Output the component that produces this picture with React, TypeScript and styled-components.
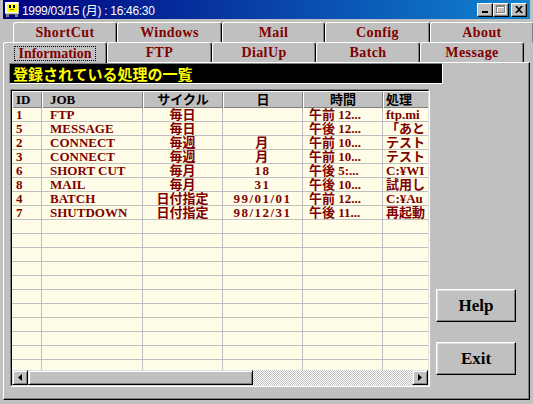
import styled, { createGlobalStyle } from "styled-components";

const GlobalStyle = createGlobalStyle`
  html, body { margin: 0; padding: 0; background: #c0c0c0; }
  body { font-family: "Liberation Serif", "Noto Sans CJK JP", serif; }
  * { box-sizing: border-box; }
`;

type Column = {
  label: string;
  width: number;
  head: "left" | "center";
  body: "left" | "center";
  pad: number;
  wide?: boolean;
};

const columns: Column[] = [
  { label: "ID", width: 30, head: "left", body: "left", pad: 4 },
  { label: "JOB", width: 101, head: "left", body: "left", pad: 8 },
  { label: "サイクル", width: 80, head: "center", body: "center", pad: 2 },
  { label: "日", width: 80, head: "center", body: "center", pad: 2, wide: true },
  { label: "時間", width: 80, head: "center", body: "left", pad: 6 },
  { label: "処理", width: 80, head: "left", body: "left", pad: 3 },
];

// the last column is cut by the list edge, so only its visible start is kept
const jobs = [
  ["1", "FTP", "毎日", "", "午前 12...", "ftp.mi"],
  ["5", "MESSAGE", "毎日", "", "午後 12...", "「あと"],
  ["2", "CONNECT", "毎週", "月", "午前 10...", "テスト"],
  ["3", "CONNECT", "毎週", "月", "午前 10...", "テスト"],
  ["6", "SHORT CUT", "毎月", "18", "午後 5:...", "C:¥WI"],
  ["8", "MAIL", "毎月", "31", "午後 10...", "試用し"],
  ["4", "BATCH", "日付指定", "99/01/01", "午前 12...", "C:¥Au"],
  ["7", "SHUTDOWN", "日付指定", "98/12/31", "午後 11...", "再起動"],
];

const backTabs = [
  { label: "ShortCut", width: 104 },
  { label: "Windows", width: 105 },
  { label: "Mail", width: 103 },
  { label: "Config", width: 105 },
  { label: "About", width: 104 },
];

const frontTabs = [
  { label: "Information", width: 104 },
  { label: "FTP", width: 105 },
  { label: "DialUp", width: 104 },
  { label: "Batch", width: 104 },
  { label: "Message", width: 104 },
];

const Window = styled.div`
  width: 533px;
  height: 404px;
  padding: 0 3px 4px 3px;
  background: #c0c0c0;
  display: flex;
  flex-direction: column;
  overflow: hidden;
`;

const TitleBar = styled.div`
  height: 19px;
  flex: none;
  display: flex;
  align-items: center;
  padding: 0 3px 0 1px;
  background: linear-gradient(90deg, #000080, #1084d0);
  color: #fff;
  font: 12px "Liberation Sans", "Noto Sans CJK JP", sans-serif;
  letter-spacing: -0.3px;
`;

const Caption = styled.span`
  margin-left: 2px;
  white-space: pre;
`;

const Controls = styled.div`
  margin-left: auto;
  display: flex;
`;

const CtrlButton = styled.div<{ $gap?: boolean }>`
  width: 16px;
  height: 14px;
  margin-left: ${(p) => (p.$gap ? 2 : 0)}px;
  background: #c0c0c0;
  border-top: 1px solid #fff;
  border-left: 1px solid #fff;
  border-right: 1px solid #000;
  border-bottom: 1px solid #000;
  box-shadow: inset -1px -1px #808080;
  display: flex;
  align-items: center;
  justify-content: center;
`;

const TabStrip = styled.div`
  margin-top: 3px;
  flex: none;
`;

const TabRow = styled.div<{ $indent: number }>`
  height: 20px;
  display: flex;
  align-items: flex-start;
  padding-left: ${(p) => p.$indent}px;
`;

const Tab = styled.div<{ $w: number; $selected?: boolean }>`
  width: ${(p) => p.$w}px;
  height: ${(p) => (p.$selected ? 21 : 20)}px;
  flex: none;
  display: flex;
  align-items: center;
  justify-content: center;
  background: #c0c0c0;
  border-top: 1px solid #fff;
  border-left: 1px solid #fff;
  border-right: 1px solid #000;
  border-radius: 3px 3px 0 0;
  box-shadow: inset -1px 0 #808080;
  color: #800000;
  font: bold 14px "Liberation Serif", serif;
  letter-spacing: 0.4px;
  position: ${(p) => (p.$selected ? "relative" : "static")};
  z-index: ${(p) => (p.$selected ? 1 : "auto")};
`;

const FocusLabel = styled.span`
  border: 1px dotted #000;
  padding: 0 3px;
  line-height: 13px;
  letter-spacing: 0;
`;

const Panel = styled.div`
  flex: 1;
  display: flex;
  flex-direction: column;
  border-top: 1px solid #fff;
  border-left: 1px solid #fff;
  border-right: 1px solid #000;
  border-bottom: 1px solid #000;
  box-shadow: inset -1px -1px #808080;
  padding-left: 5px;
`;

const Banner = styled.div`
  width: 434px;
  height: 21px;
  padding-left: 3px;
  background: #000;
  color: #ffff00;
  border-top: 1px solid #808080;
  border-left: 1px solid #808080;
  border-right: 1px solid #fff;
  border-bottom: 1px solid #fff;
  font: bold 15px "Noto Sans CJK JP", sans-serif;
  line-height: 19px;
`;

const Body = styled.div`
  display: flex;
  gap: 6px;
  margin-top: 5px;
  margin-left: 1px;
`;

const ListFrame = styled.div`
  width: 420px;
  height: 298px;
  border-top: 1px solid #808080;
  border-left: 1px solid #808080;
  border-right: 1px solid #fff;
  border-bottom: 1px solid #fff;
`;

const ListInner = styled.div`
  height: 100%;
  display: flex;
  flex-direction: column;
  overflow: hidden;
  background: #fffde8;
  border-top: 1px solid #000;
  border-left: 1px solid #000;
  border-right: 1px solid #dfdfdf;
  border-bottom: 1px solid #dfdfdf;
`;

const GridRow = styled.div<{ $head?: boolean }>`
  display: grid;
  grid-template-columns: ${columns.map((c) => `${c.width}px`).join(" ")};
  height: ${(p) => (p.$head ? 17 : 14)}px;
  flex: none;
`;

const HeadCell = styled.div<{ $align: string; $pad: number }>`
  background: #c0c0c0;
  box-shadow: inset 1px 1px #fff, inset -1px -1px #808080;
  color: #000;
  font: bold 13px "Liberation Serif", "Noto Sans CJK JP", serif;
  line-height: 17px;
  text-align: ${(p) => p.$align};
  padding: 0 ${(p) => p.$pad}px;
  white-space: nowrap;
  overflow: hidden;
`;

const Cell = styled.div<{ $align: string; $pad: number; $wide?: boolean }>`
  border-right: 1px solid #c0c0c0;
  border-bottom: 1px solid #c0c0c0;
  color: #800000;
  font: bold 13px "Liberation Serif", "Noto Sans CJK JP", serif;
  line-height: 13px;
  letter-spacing: ${(p) => (p.$wide ? 1.5 : 0)}px;
  text-align: ${(p) => p.$align};
  padding: 0 ${(p) => p.$pad}px;
  white-space: nowrap;
  overflow: hidden;
`;

const Rows = styled.div`
  flex: 1;
  overflow: hidden;
`;

const HScroll = styled.div`
  height: 15px;
  flex: none;
  display: flex;
`;

const ScrollButton = styled.div<{ $w: number }>`
  width: ${(p) => p.$w}px;
  height: 15px;
  flex: none;
  background: #c0c0c0;
  border-top: 1px solid #dfdfdf;
  border-left: 1px solid #dfdfdf;
  border-right: 1px solid #000;
  border-bottom: 1px solid #000;
  box-shadow: inset 1px 1px #fff, inset -1px -1px #808080;
  display: flex;
  align-items: center;
  justify-content: center;
`;

const Track = styled.div`
  flex: 1;
  background: repeating-conic-gradient(#c0c0c0 0% 25%, #fff 0% 50%) 0 0 / 2px 2px;
`;

const ButtonColumn = styled.div`
  width: 80px;
  display: flex;
  flex-direction: column;
  justify-content: flex-end;
  gap: 20px;
  padding-bottom: 12px;
`;

const PushButton = styled.button`
  width: 80px;
  height: 33px;
  padding: 0;
  background: #c0c0c0;
  border-top: 1px solid #fff;
  border-left: 1px solid #fff;
  border-right: 1px solid #000;
  border-bottom: 1px solid #000;
  box-shadow: inset -1px -1px #808080, inset 1px 1px #dfdfdf;
  color: #000;
  font: bold 17px "Liberation Serif", serif;
`;

const AppIcon = () => (
  <svg width="16" height="16" viewBox="0 0 16 16">
    <rect x="1" y="0" width="14" height="12" fill="#c0c0c0" />
    <rect x="1" y="0" width="13" height="11" fill="#fff" />
    <rect x="3" y="2" width="10" height="8" fill="#ffff00" />
    <rect x="5" y="3" width="2" height="3" fill="#000" />
    <rect x="9" y="3" width="2" height="3" fill="#000" />
    <rect x="6" y="7" width="4" height="1" fill="#808000" />
    <rect x="2" y="12" width="3" height="3" fill="#808080" />
    <rect x="11" y="12" width="3" height="3" fill="#808080" />
    <rect x="5" y="12" width="6" height="1" fill="#404040" />
  </svg>
);

const MinGlyph = () => (
  <svg width="8" height="7" viewBox="0 0 8 7">
    <rect x="1" y="5" width="6" height="2" fill="#000" />
  </svg>
);

const MaxGlyph = () => (
  <svg width="10" height="9" viewBox="0 0 10 9">
    <rect x="1.5" y="1.5" width="8" height="7" fill="none" stroke="#fff" />
    <rect x="1" y="1" width="8" height="2" fill="#fff" />
    <rect x="0.5" y="0.5" width="8" height="7" fill="none" stroke="#808080" />
    <rect x="0" y="0" width="9" height="2" fill="#808080" />
  </svg>
);

const CloseGlyph = () => (
  <svg width="8" height="7" viewBox="0 0 8 7">
    <path d="M0 0h2l2 2 2-2h2L5 3.5 8 7H6L4 5 2 7H0l3-3.5z" fill="#000" />
  </svg>
);

const Arrow = ({ dir }: { dir: "left" | "right" }) => (
  <svg width="4" height="7" viewBox="0 0 4 7">
    <path d={dir === "left" ? "M4 0v7L0 3.5z" : "M0 0v7l4-3.5z"} fill="#000" />
  </svg>
);

const App = () => {
  const emptyRows = Array.from({ length: 11 }, () => ["", "", "", "", "", ""]);
  const rows = [...jobs, ...emptyRows];

  return (
    <>
      <GlobalStyle />
      <Window>
        <TitleBar>
          <AppIcon />
          <Caption>1999/03/15 (月) : 16:46:30</Caption>
          <Controls>
            <CtrlButton>
              <MinGlyph />
            </CtrlButton>
            <CtrlButton>
              <MaxGlyph />
            </CtrlButton>
            <CtrlButton $gap>
              <CloseGlyph />
            </CtrlButton>
          </Controls>
        </TitleBar>

        <TabStrip>
          <TabRow $indent={10}>
            {backTabs.map((t) => (
              <Tab key={t.label} $w={t.width}>
                {t.label}
              </Tab>
            ))}
          </TabRow>
          <TabRow $indent={0}>
            {frontTabs.map((t, i) => (
              <Tab key={t.label} $w={t.width} $selected={i === 0}>
                {i === 0 ? <FocusLabel>{t.label}</FocusLabel> : t.label}
              </Tab>
            ))}
          </TabRow>
        </TabStrip>

        <Panel>
          <Banner>登録されている処理の一覧</Banner>
          <Body>
            <ListFrame>
              <ListInner>
                <GridRow $head>
                  {columns.map((c) => (
                    <HeadCell key={c.label} $align={c.head} $pad={c.pad}>
                      {c.label}
                    </HeadCell>
                  ))}
                </GridRow>
                <Rows>
                  {rows.map((r, ri) => (
                    <GridRow key={ri}>
                      {columns.map((c, ci) => (
                        <Cell key={c.label} $align={c.body} $pad={c.pad} $wide={c.wide}>
                          {r[ci]}
                        </Cell>
                      ))}
                    </GridRow>
                  ))}
                </Rows>
                <HScroll>
                  <ScrollButton $w={16}>
                    <Arrow dir="left" />
                  </ScrollButton>
                  <ScrollButton $w={225} />
                  <Track />
                  <ScrollButton $w={16}>
                    <Arrow dir="right" />
                  </ScrollButton>
                </HScroll>
              </ListInner>
            </ListFrame>
            <ButtonColumn>
              <PushButton>Help</PushButton>
              <PushButton>Exit</PushButton>
            </ButtonColumn>
          </Body>
        </Panel>
      </Window>
    </>
  );
};

export default App;
